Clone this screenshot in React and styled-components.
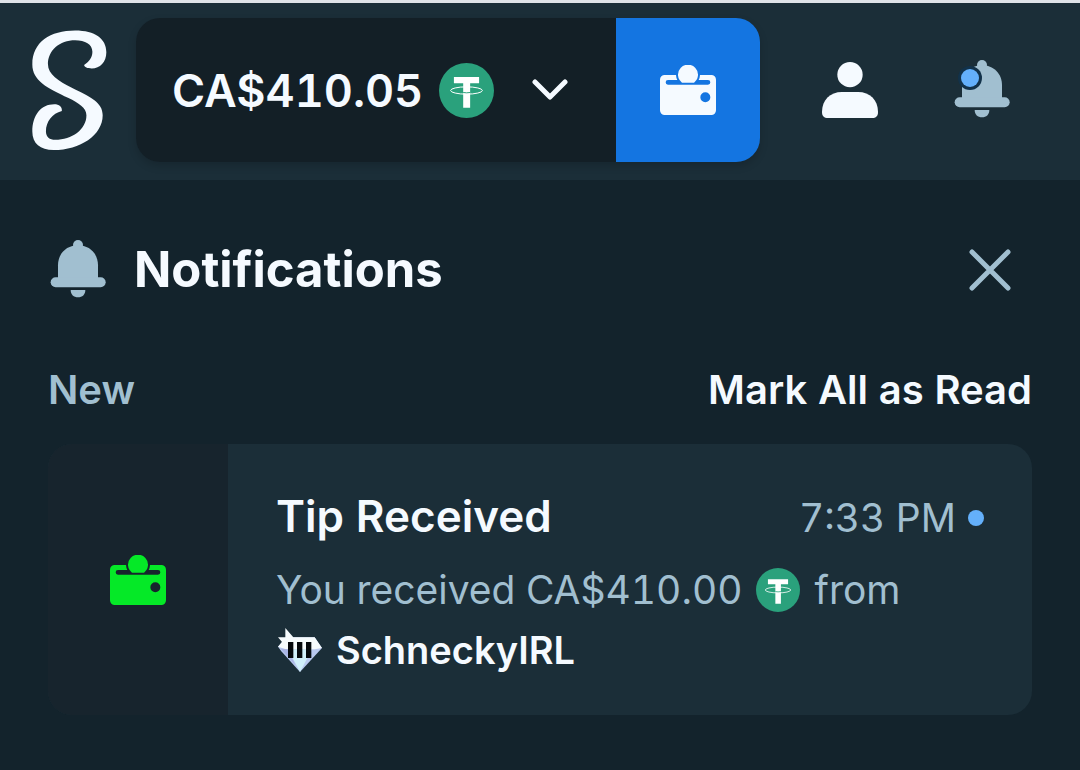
import styled, { createGlobalStyle } from "styled-components";

const GlobalStyle = createGlobalStyle`
  * {
    box-sizing: border-box;
  }
  :root {
    --clr-strip: #dfe3e8;
    --clr-header: #1b2e38;
    --clr-page: #13232c;
    --clr-dark: #131f26;
    --clr-cell: #17242d;
    --clr-blue: #1475e1;
    --clr-dot: #64b0fb;
    --clr-green: #05e927;
    --clr-tether: #2aa17c;
    --clr-text: #f5faff;
    --clr-muted: #a1bfd0;
  }
  body {
    margin: 0;
    min-height: 100vh;
    background: var(--clr-page);
    color: var(--clr-text);
    font-family: Inter, "Liberation Sans", sans-serif;
    font-variant-numeric: tabular-nums;
  }
  button {
    padding: 0;
    border: 0;
    background: none;
    color: inherit;
    font: inherit;
    font-variant-numeric: tabular-nums;
    cursor: pointer;
  }
  svg {
    display: block;
    flex: none;
  }
`;

const Header = styled.header`
  display: flex;
  align-items: center;
  padding: 15px 70px 18px 32px;
  border-top: 3px solid var(--clr-strip);
  background: var(--clr-header);
`;

const Home = styled.a`
  margin-right: 29px;
  color: var(--clr-text);
`;

const Balance = styled.div`
  display: flex;
  flex: 0 1 624px;
  height: 144px;
  border-radius: 24px;
  overflow: hidden;
  box-shadow: 0 4px 8px rgba(0, 0, 0, 0.16);
`;

const BalanceButton = styled.button`
  display: flex;
  flex: 1;
  align-items: center;
  padding: 0 48px 0 36px;
  background: var(--clr-dark);
  font-size: 45px;
  font-weight: 600;
  white-space: nowrap;

  svg {
    margin-left: 16px;
  }
  svg:last-child {
    margin-left: auto;
  }
`;

const WalletButton = styled.button`
  display: grid;
  place-items: center;
  width: 144px;
  background: var(--clr-blue);
`;

const Actions = styled.nav`
  display: flex;
  align-items: center;
  gap: 76px;
  margin-left: auto;
`;

const IconButton = styled.button`
  display: grid;
  place-items: center;
  color: ${(props) => (props.$muted ? "var(--clr-muted)" : "var(--clr-text)")};
`;

const Panel = styled.main`
  padding: 54px 48px;
`;

const PanelHeader = styled.div`
  display: flex;
  align-items: center;
  gap: 28px;
  height: 72px;
  padding: 0 20px 0 2px;
  color: var(--clr-muted);

  button {
    margin-left: auto;
  }
`;

const Title = styled.h1`
  margin: 0;
  color: var(--clr-text);
  font-size: 49px;
  font-weight: 700;
  line-height: 72px;
`;

const SectionHeader = styled.div`
  display: flex;
  align-items: center;
  justify-content: space-between;
  margin: 54px 0 24px;
  font-size: 40px;
  font-weight: 600;
  line-height: 60px;
`;

const SectionTitle = styled.h2`
  margin: 0;
  color: var(--clr-muted);
  font: inherit;
`;

const Card = styled.article`
  display: flex;
  border-radius: 24px;
  overflow: hidden;
  background: var(--clr-header);
`;

const CardIcon = styled.div`
  display: grid;
  place-items: center;
  flex: 0 0 180px;
  background: var(--clr-cell);
  color: var(--clr-green);
`;

const CardBody = styled.div`
  flex: 1;
  padding: 36px 48px 35px;
`;

const CardHeader = styled.div`
  display: flex;
  align-items: baseline;
  justify-content: space-between;
  height: 72px;
  margin-bottom: 8px;
  line-height: 72px;
`;

const CardTitle = styled.h3`
  margin: 0;
  font-size: 44px;
  font-weight: 600;
`;

const Time = styled.time`
  display: flex;
  align-items: center;
  gap: 12px;
  color: var(--clr-muted);
  font-size: 39px;
`;

const Unread = styled.span`
  width: 16px;
  height: 16px;
  border-radius: 50%;
  background: var(--clr-dot);
`;

const Message = styled.p`
  display: flex;
  flex-wrap: wrap;
  align-items: center;
  column-gap: 14px;
  margin: 0;
  color: var(--clr-muted);
  font-size: 39px;
  line-height: 60px;
`;

const Sender = styled.a`
  display: flex;
  flex-basis: 100%;
  align-items: center;
  gap: 14px;
  padding-left: 2px;
  color: var(--clr-text);
  font-size: 38px;
  font-weight: 600;
  text-decoration: none;
`;

function Logo() {
  return (
    <svg width="75" height="121" viewBox="95 89 226 363" fill="currentColor">
      <path d="M252 194C266 185 277 172 277 154C277 131 255 119 225 119C178 119 143 150 143 191C143 222 175 243 215 262C270 290 308 305 308 345C308 405 240 450 160 450C120 450 96 430 96 395C96 345 122 312 162 312C177 312 186 319 185 332C156 339 137 365 137 393C137 411 148 419 165 419C215 419 259 388 259 345C259 322 235 308 205 293C140 263 96 240 96 192C96 125 150 90 225 90C285 90 319 115 319 155C319 185 300 204 275 204C262 204 253 201 252 194Z" />
    </svg>
  );
}

function Wallet() {
  return (
    <svg width="56" height="50" viewBox="180 165 168 150" fill="currentColor">
      <path
        fillRule="evenodd"
        d="M194 195H228A36 36 0 0 0 232 210H204a7 7 0 0 0 0 14H324a7 7 0 0 0 0-14H296A36 36 0 0 0 300 195H334a14 14 0 0 1 14 14V301a14 14 0 0 1-14 14H194a14 14 0 0 1-14-14V209a14 14 0 0 1 14-14ZM316 247a15 15 0 1 0 0 30a15 15 0 1 0 0-30Z"
      />
      <path d="M246 218A30 30 0 1 1 282 218Z" />
    </svg>
  );
}

function Tether({ size }) {
  return (
    <svg width={size} height={size} viewBox="0 0 166 166">
      <circle cx="83" cy="83" r="83" fill="var(--clr-tether)" />
      <path fill="#fff" d="M45 42H121V61H94V135H73V61H45Z" />
      <ellipse cx="83" cy="83" rx="48" ry="11" fill="none" stroke="#fff" strokeWidth="3" />
      <path d="M73 89Q83 91 94 89" fill="none" stroke="var(--clr-tether)" strokeWidth="3" />
    </svg>
  );
}

function Chevron() {
  return (
    <svg width="36" height="22" viewBox="0 0 36 22" fill="none">
      <path
        d="M3 3L18 18L33 3"
        stroke="currentColor"
        strokeWidth="5"
        strokeLinecap="round"
        strokeLinejoin="round"
      />
    </svg>
  );
}

function User() {
  return (
    <svg width="56" height="56" viewBox="66 66 168 168" fill="currentColor">
      <circle cx="150" cy="104" r="38" />
      <path d="M66 216C66 180 90 156 126 156H174C210 156 234 180 234 216C234 228 228 234 216 234H84C72 234 66 228 66 216Z" />
    </svg>
  );
}

function Bell({ badge }) {
  return (
    <svg width="56" height="60" viewBox="0 2 168 180" fill="currentColor">
      <circle cx="84" cy="17" r="15" />
      <path d="M24 120V78C24 42 50 18 84 18S144 42 144 78V120Z" />
      <rect x="2" y="114" width="165" height="30" rx="15" />
      <path d="M62 152H106C106 166 97 174 84 174S62 166 62 152Z" />
      {badge && (
        <>
          <circle cx="48" cy="56" r="36" fill="#12324a" />
          <circle cx="48" cy="56" r="27" fill="var(--clr-dot)" />
        </>
      )}
    </svg>
  );
}

function Close() {
  return (
    <svg width="44" height="44" viewBox="0 0 44 44" fill="none">
      <path
        d="M4 4L40 40M40 4L4 40"
        stroke="currentColor"
        strokeWidth="5"
        strokeLinecap="round"
      />
    </svg>
  );
}

function Diamond() {
  return (
    <svg width="44" height="44" viewBox="0 0 132 132">
      <path fill="#b9c9ef" d="M0 56L24 28H110L132 60L66 132L10 70Z" />
      <path fill="#f6fbfd" d="M22 0L46 28H110L132 60L110 64H24L0 56L12 42L0 28H22Z" />
      <path fill="#d0effa" d="M30 64H102L66 132Z" />
      <path fill="#a9b4e4" d="M8 62L30 64L52 112Z" />
      <path fill="#05090d" d="M30 42H46V90H30ZM57 42H73V90H57ZM84 42H100V90H84Z" />
    </svg>
  );
}

export default function App() {
  return (
    <>
      <GlobalStyle />
      <Header>
        <Home href="#home" aria-label="Home">
          <Logo />
        </Home>
        <Balance>
          <BalanceButton>
            CA$410.05
            <Tether size={55} />
            <Chevron />
          </BalanceButton>
          <WalletButton aria-label="Wallet">
            <Wallet />
          </WalletButton>
        </Balance>
        <Actions>
          <IconButton aria-label="Account">
            <User />
          </IconButton>
          <IconButton $muted aria-label="Notifications">
            <Bell badge />
          </IconButton>
        </Actions>
      </Header>
      <Panel>
        <PanelHeader>
          <Bell />
          <Title>Notifications</Title>
          <IconButton $muted aria-label="Close">
            <Close />
          </IconButton>
        </PanelHeader>
        <SectionHeader>
          <SectionTitle>New</SectionTitle>
          <button>Mark All as Read</button>
        </SectionHeader>
        <Card>
          <CardIcon>
            <Wallet />
          </CardIcon>
          <CardBody>
            <CardHeader>
              <CardTitle>Tip Received</CardTitle>
              <Time>
                7:33 PM
                <Unread />
              </Time>
            </CardHeader>
            <Message>
              <span>You received CA$410.00</span>
              <Tether size={44} />
              <span>from</span>
              <Sender href="#user">
                <Diamond />
                SchneckyIRL
              </Sender>
            </Message>
          </CardBody>
        </Card>
      </Panel>
    </>
  );
}
